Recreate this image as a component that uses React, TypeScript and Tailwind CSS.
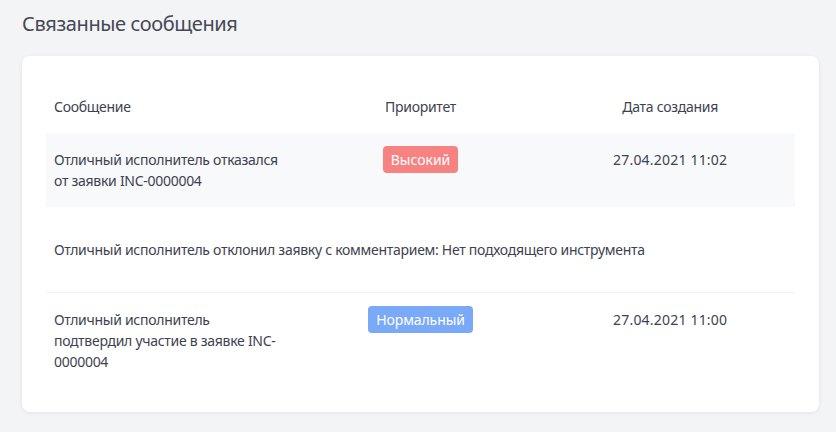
const messages = [
  {
    id: 1,
    text: "Отличный исполнитель отказался от заявки INC-0000004",
    priority: "high",
    created: "27.04.2021 11:02",
    comment:
      "Отличный исполнитель отклонил заявку с комментарием: Нет подходящего инструмента",
  },
  {
    id: 2,
    text: "Отличный исполнитель подтвердил участие в заявке INC-0000004",
    priority: "normal",
    created: "27.04.2021 11:00",
  },
];

const PriorityBadge = ({ priority }: { priority: string }) =>
  priority === "high" ? (
    <span className="inline-block rounded px-2 py-[3px] leading-[21px] tracking-normal text-white bg-[#f78282]">
      Высокий
    </span>
  ) : (
    <span className="inline-block rounded px-2 py-[3px] leading-[21px] tracking-[-0.1px] text-white bg-[#7aa9f8]">
      Нормальный
    </span>
  );

export default function App() {
  return (
    <div
      className="min-h-[432px] bg-[#f3f4f6] pl-[22px] pr-[17px] pt-[10px] pb-5 text-[#3e4250]"
      style={{ fontFamily: '"Noto Sans", "Open Sans", sans-serif' }}
    >
      <h2 className="text-[20px] leading-[28px] tracking-[-0.4px] text-[#454955] mb-[18px]">
        Связанные сообщения
      </h2>
      <div className="bg-white rounded-lg shadow-[0_1px_4px_rgba(0,0,0,0.08)] px-6 pt-6 pb-6">
        <table className="w-full table-fixed text-[14px] leading-[21px] tracking-[-0.28px] border-collapse">
          <thead>
            <tr>
              <th className="font-normal text-left px-2 pt-4 pb-4">Сообщение</th>
              <th className="font-normal text-center px-2 pt-4 pb-4">Приоритет</th>
              <th className="font-normal text-center px-2 pt-4 pb-4">
                Дата создания
              </th>
            </tr>
          </thead>
          <tbody>
            {messages.map((m, i) => (
              <>
                <tr
                  key={m.id}
                  className={i === 0 ? "bg-[#f8f9fb] align-top" : "align-top"}
                >
                  <td className="px-2 py-4">{m.text}</td>
                  <td className="px-2 pt-[13px] pb-4 text-center">
                    <PriorityBadge priority={m.priority} />
                  </td>
                  <td className="px-2 py-4 text-center tracking-[0.2px]">
                    {m.created}
                  </td>
                </tr>
                {m.comment && (
                  <tr key={`${m.id}-c`} className="border-b border-[#f1f2f4]">
                    <td colSpan={3} className="px-2 py-8">
                      {m.comment}
                    </td>
                  </tr>
                )}
              </>
            ))}
          </tbody>
        </table>
      </div>
    </div>
  );
}
